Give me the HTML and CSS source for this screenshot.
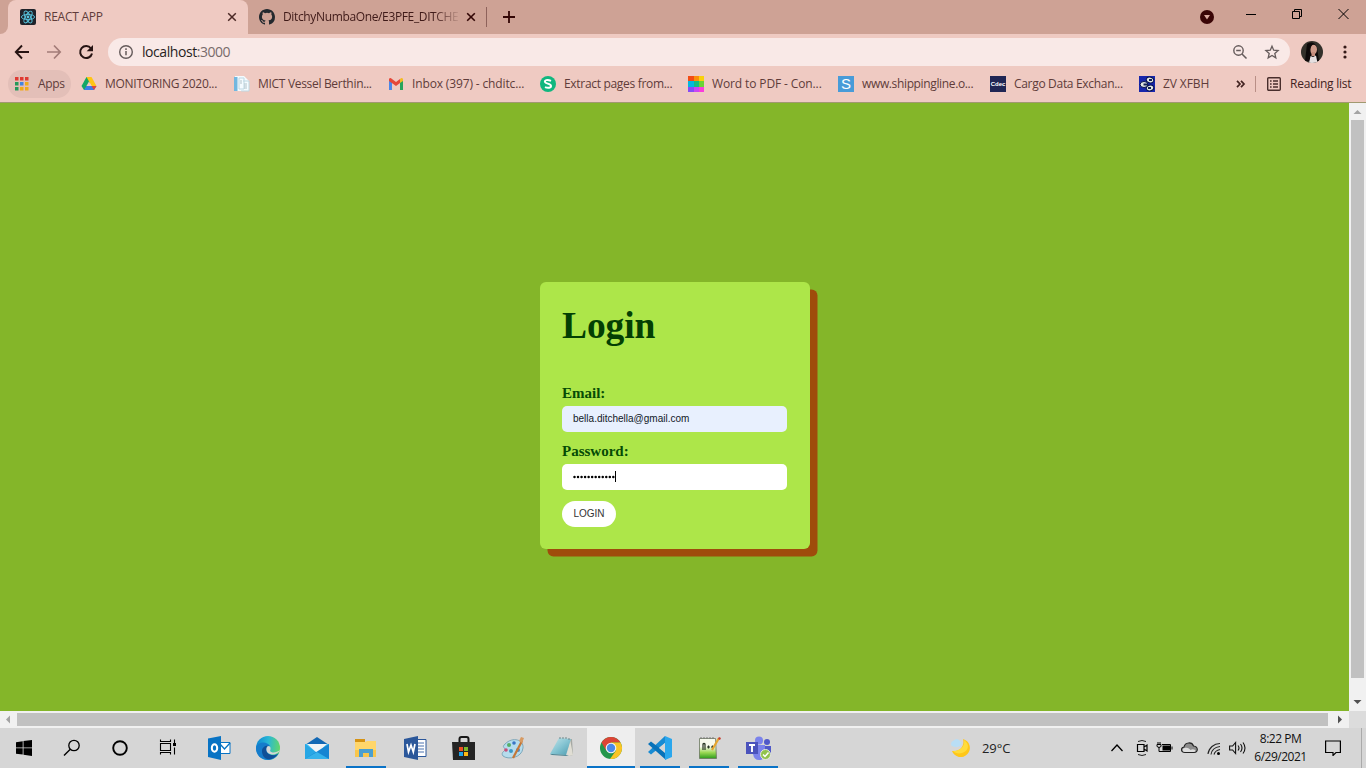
FILE: index.html
```html
<!DOCTYPE html>
<html lang="en">
<head>
<meta charset="utf-8">
<title>REACT APP</title>
<link rel="stylesheet" href="styles.css">
</head>
<body>
<header class="tabs">
  <span class="tab-edge"></span>
  <div class="tab active">
    <svg width="16" height="16" viewBox="0 0 16 16"><rect width="16" height="16" rx="2" fill="#20232a"/><g fill="none" stroke="#58c5df" stroke-width=".9"><ellipse cx="8" cy="8" rx="6.6" ry="2.6"/><ellipse cx="8" cy="8" rx="6.6" ry="2.6" transform="rotate(60 8 8)"/><ellipse cx="8" cy="8" rx="6.6" ry="2.6" transform="rotate(120 8 8)"/></g><circle cx="8" cy="8" r="1.4" fill="#58c5df"/></svg>
    <span class="tab-title">REACT APP</span>
    <svg class="x" width="10" height="10" viewBox="0 0 10 10"><path d="M1.2 1.2l7.6 7.6M8.8 1.2L1.2 8.8" stroke="#4b2926" stroke-width="1.5"/></svg>
  </div>
  <div class="tab second">
    <svg width="16" height="16" viewBox="0 0 16 16"><path fill="#24292e" d="M8 0C3.58 0 0 3.58 0 8c0 3.54 2.29 6.53 5.47 7.59.4.07.55-.17.55-.38 0-.19-.01-.82-.01-1.49-2.01.37-2.53-.49-2.69-.94-.09-.23-.48-.94-.82-1.13-.28-.15-.68-.52-.01-.53.63-.01 1.08.58 1.23.82.72 1.21 1.87.87 2.33.66.07-.52.28-.87.51-1.07-1.78-.2-3.64-.89-3.64-3.95 0-.87.31-1.59.82-2.15-.08-.2-.36-1.02.08-2.12 0 0 .67-.21 2.2.82a7.6 7.6 0 0 1 4 0c1.53-1.04 2.2-.82 2.2-.82.44 1.1.16 1.92.08 2.12.51.56.82 1.27.82 2.15 0 3.07-1.87 3.75-3.65 3.95.29.25.54.73.54 1.48 0 1.07-.01 1.93-.01 2.2 0 .21.15.46.55.38A8 8 0 0 0 16 8c0-4.42-3.58-8-8-8z"/></svg>
    <span class="tab-title fade">DitchyNumbaOne/E3PFE_DITCHE</span>
    <svg class="x" width="10" height="10" viewBox="0 0 10 10"><path d="M1.2 1.2l7.6 7.6M8.8 1.2L1.2 8.8" stroke="#320605" stroke-width="1.6"/></svg>
  </div>
  <span class="tab-rule"></span>
  <svg class="plus" width="12" height="12" viewBox="0 0 12 12"><path d="M6 0v12M0 6h12" stroke="#320605" stroke-width="1.8"/></svg>
  <div class="window-controls">
    <svg width="14" height="34" viewBox="0 0 14 34"><circle cx="7" cy="17" r="7" fill="#3a0506"/><path d="M4 15h6l-3 4.5z" fill="#dba99f"/></svg>
    <svg width="10" height="28" viewBox="0 0 10 28"><path d="M0 14.5h10" stroke="#000"/></svg>
    <svg width="10" height="28" viewBox="0 0 10 28"><path d="M.5 11.500h7v7h-7zM2.500 11.500v-2h7v7h-2" fill="none" stroke="#000"/></svg>
    <svg width="11" height="28" viewBox="0 0 11 28"><path d="M.5 9l10 10M10.500 9l-10 10" stroke="#000"/></svg>
  </div>
</header>
<nav class="toolbar">
  <svg width="16" height="16" viewBox="0 0 16 16"><path d="M15 8H2M8 1.500L1.800 8 8 14.500" fill="none" stroke="#261312" stroke-width="1.900"/></svg>
  <svg width="16" height="16" viewBox="0 0 16 16"><path d="M1 8h13M8 1.500L14.200 8 8 14.500" fill="none" stroke="#a37c78" stroke-width="1.700"/></svg>
  <svg width="16" height="16" viewBox="0 0 16 16"><path d="M13 4.500A6 6 0 1 0 14 9.500" fill="none" stroke="#261312" stroke-width="2"/><path d="M15 1v6.300H8.700z" fill="#261312"/></svg>
  <div class="address">
    <svg width="16" height="16" viewBox="0 0 16 16"><circle cx="8" cy="8" r="6.300" fill="none" stroke="#655b5b" stroke-width="1.400"/><path d="M8 7v4.300M8 4.300v1.600" stroke="#655b5b" stroke-width="1.500"/></svg>
    <span class="url">localhost<i>:3000</i></span>
    <svg class="magnifier" width="16" height="16" viewBox="0 0 16 16"><circle cx="6.500" cy="6.500" r="4.700" fill="none" stroke="#655b5b" stroke-width="1.400"/><path d="M4.200 6.500h4.600M10 10l4.500 4.500" stroke="#655b5b" stroke-width="1.500"/></svg>
    <svg width="16" height="16" viewBox="0 0 16 16"><path d="M8 2.200l1.700 4 4.400.4-3.300 2.900 1 4.300L8 11.500l-3.800 2.300 1-4.300L1.900 6.600l4.400-.4z" fill="none" stroke="#655b5b" stroke-width="1.300"/></svg>
  </div>
  <svg class="avatar" width="22" height="22" viewBox="0 0 22 22"><defs><clipPath id="face"><circle cx="11" cy="11" r="11"/></clipPath></defs><g clip-path="url(#face)"><path fill="#33302a" d="M0 0h22v22H0z"/><path fill="#0c0909" d="M6 3q6-4 10 3l2 14H4z"/><ellipse cx="12.500" cy="8.500" rx="3.500" ry="4.800" fill="#cf9b8a"/><path fill="#c68e7d" d="M10.500 11h3.500v4h-3.500z"/><path d="M8 22l1.500-7 2.500 1 3-1.500 1.500 7.500z" fill="#e5dfe0"/><path d="M8 8q1-5 5-5-3 1-3.500 5L9 18l-3 2z" fill="#100b0b"/></g></svg>
  <svg class="kebab" width="4" height="16" viewBox="0 0 4 16"><g fill="#351917"><circle cx="2" cy="3" r="1.600"/><circle cx="2" cy="8" r="1.600"/><circle cx="2" cy="13" r="1.600"/></g></svg>
</nav>
<nav class="bookmarks">
  <div class="apps"><svg width="14" height="14" viewBox="0 0 14 14"><path fill="#df3a32" d="M0 0h3.500v3.500H0zM5 0h3.500v3.500H5zM10 0h3.500v3.500H10z"/><path fill="#25995a" d="M0 5h3.500v3.500H0zM0 10h3.500v3.500H0z"/><path fill="#4285e0" d="M5 5h3.500v3.500H5z"/><path fill="#f1aa19" d="M10 5h3.500v3.500H10zM5 10h3.500v3.500H5zM10 10h3.500v3.500H10z"/></svg><span>Apps</span></div>
  <div class="mark m1"><svg width="16" height="16" viewBox="0 0 16 16"><path fill="#13a766" d="M5.500 1H8l2.500 4L5 14H3L.5 10z"/><path fill="#ffc515" d="M5.500 1h5l5 9h-5z"/><path fill="#3b7de8" d="M5.500 10h10L13 14H3z"/><path fill="#e44538" d="M10.500 10h5L13 14z"/><path fill="#efcac2" d="M8 5.500l2.700 4.500H5.400z"/></svg><span>MONITORING 2020...</span></div>
  <div class="mark m2"><svg width="16" height="16" viewBox="0 0 16 16"><path fill="#f4fbff" d="M1 0h9l5 5v10H1z"/><path fill="#72b7df" d="M0 1h3.500v14H0z"/><path d="M5 2h5v11H5zM9 5h6v10H7" fill="none" stroke="#bed7e2"/><path d="M6 5h2M6 7h2M10 8h3M10 10h3M10 12h3" stroke="#b3c3ca"/></svg><span>MICT Vessel Berthin...</span></div>
  <div class="mark m3"><svg width="16" height="16" viewBox="0 0 16 16"><path fill="#4c87e8" d="M1 4l3 2v8H1z"/><path fill="#29a45c" d="M12 6l3-2v10h-3z"/><path fill="#e64739" d="M1 3q1-2 3 0l4 3 4-3v4l-4 3-7-5z"/><path fill="#f3bb23" d="M12 3q2-2 3 0v2l-3 2z"/></svg><span>Inbox (397) - chditc...</span></div>
  <div class="mark m4"><svg width="16" height="16" viewBox="0 0 16 16"><circle cx="8" cy="8" r="8" fill="#10b77f"/><path d="M11 4.800C7 3 4.500 4.300 5 6c.5 1.800 5.700 1.500 6 3.800.2 2-3 2.600-6 1.300" fill="none" stroke="#fff" stroke-width="2"/></svg><span>Extract pages from...</span></div>
  <div class="mark m5"><svg width="16" height="16" viewBox="0 0 16 16"><path fill="#f24c15" d="M0 0h6v5H0z"/><path fill="#fa8e0b" d="M6 0h5v5H6z"/><path fill="#f8d10b" d="M11 0h5v5h-5z"/><path fill="#04b6df" d="M0 5h6v6H0z"/><path fill="#12be82" d="M6 5h5v6H6z"/><path fill="#69d435" d="M11 5h5v6h-5z"/><path fill="#874bf5" d="M0 11h6v5H0z"/><path fill="#ca44f6" d="M6 11h5v5H6z"/><path fill="#fa3bdc" d="M11 11h5v5h-5z"/></svg><span>Word to PDF - Con...</span></div>
  <div class="mark m6"><b class="ship">S</b><span>www.shippingline.o...</span></div>
  <div class="mark m7"><b class="cdec">Cdec</b><span>Cargo Data Exchan...</span></div>
  <div class="mark m8"><svg width="16" height="16" viewBox="0 0 16 16"><path fill="#1827ab" d="M0 0h16v16H0z"/><g fill="#e4eae4" stroke="#05104e"><ellipse cx="11" cy="4" rx="3.800" ry="2.900" transform="rotate(15 11 4)"/><ellipse cx="11" cy="12" rx="3.800" ry="2.900" transform="rotate(-15 11 12)"/><ellipse cx="5" cy="8.500" rx="3.900" ry="3"/></g><path d="M4.500 8.500H9M10 4h3M9 12h3" stroke="#122154" stroke-width="1.900"/></svg><span>ZV XFBH</span></div>
  <svg width="10" height="8" viewBox="0 0 10 8"><path d="M1 .8L4 4 1 7.200M5 .8L8 4 5 7.200" fill="none" stroke="#422321" stroke-width="1.700"/></svg>
  <span class="rule"></span>
  <svg width="14" height="14" viewBox="0 0 14 14"><rect x=".7" y=".7" width="12.600" height="12.600" rx="1" fill="none" stroke="#482e2c" stroke-width="1.400"/><path d="M3 4h1.600M6 4h5M3 7h1.600M6 7h5M3 10h1.600M6 10h5" stroke="#482e2c" stroke-width="1.500"/></svg>
  <span class="reading">Reading list</span>
</nav>
<main class="viewport">
  <section class="page">
    <form class="card">
      <h1>Login</h1>
      <label for="email">Email:</label>
      <input id="email" class="field filled" type="text" value="bella.ditchella@gmail.com">
      <label for="password">Password:</label>
      <div id="password" class="field password"><svg width="42" height="4" viewBox="0 0 42 4"><path d="M1.500 2h40" stroke="#000" stroke-width="2.500" stroke-linecap="round" stroke-dasharray="0 3.530"/></svg><span class="caret"></span></div>
      <button type="button">LOGIN</button>
    </form>
  </section>
  <div class="vbar"><svg width="17" height="17"><path d="M4.500 11l4-4 4 4z" fill="#a3a3a3"/></svg><span></span><svg width="17" height="17"><path d="M4.500 6l4 4 4-4z" fill="#505050"/></svg></div>
  <div class="hbar"><svg width="17" height="17"><path d="M10 4.500l-4 4 4 4z" fill="#a3a3a3"/></svg><span></span><svg width="17" height="17"><path d="M6 4.500l4 4-4 4z" fill="#505050"/></svg></div>
  <div class="corner"></div>
</main>
<footer class="taskbar">
  <div class="system">
    <svg width="16" height="16" viewBox="0 0 16 16"><path d="M0 2.300L6.700 1.200v6.300H0zM7.500 1L16 0v7.500H7.500zM0 8.300h6.700v6.300L0 13.700zM7.500 8.300H16V16l-8.500-1.200z"/></svg>
    <svg width="18" height="18" viewBox="0 0 18 18"><circle cx="11" cy="6.500" r="5.200" fill="none" stroke="#000" stroke-width="1.300"/><path d="M7.300 10.200L1 16.500" stroke="#000" stroke-width="1.400"/></svg>
    <svg width="18" height="18" viewBox="0 0 18 18"><circle cx="9" cy="9" r="6.800" fill="none" stroke="#000" stroke-width="1.900"/></svg>
    <svg width="18" height="16" viewBox="0 0 18 16"><path d="M1.500 .5v2h10v-2M1.500 15.500v-2h10v2M1.500 4.500h10v7h-10zM15.500 .5v4M15.500 8.500v7" fill="none" stroke="#000" stroke-width="1.100"/><path d="M14 4h3v3h-3z"/></svg>
  </div>
  <div class="programs">
    <div class="app"><svg viewBox="0 0 24 24"><path fill="#fff" stroke="#0873c4" d="M11 6.500h12v11H11z"/><path d="M13 8l4.500 5L23 7" fill="none" stroke="#0873c4" stroke-width="1.300"/><path fill="#0873c4" d="M1 2.500L14 0v24L1 21z"/><ellipse cx="7.500" cy="12" rx="2.700" ry="3.700" fill="none" stroke="#fff" stroke-width="2"/></svg></div>
    <div class="app"><svg viewBox="0 0 24 24"><defs><linearGradient id="edge" x1="0" y1=".3" x2="1" y2=".4"><stop stop-color="#0d87d3"/><stop offset=".5" stop-color="#2ab8d5"/><stop offset="1" stop-color="#62d66a"/></linearGradient></defs><circle cx="12" cy="12" r="12" fill="url(#edge)"/><path d="M0 12c2-7 11-7 14-2-3 0-4 3-3 6 2 4 8 4 12 1-3 5-7 7-11 7C5 24 0 19 0 12z" fill="#167ccb"/><path d="M6 15c0-4 4-6 7-5-3 1-3 4-2 6 2 4 8 4 11 2-3 4-7 6-11 5-3-1-5-4-5-8z" fill="#104f97"/><path d="M12 10c3 0 3 3 2 5 3 3 7 1 10-1-2 5-10 6-13 2-1-2-1-5 1-6z" fill="#d6d6d6"/></svg></div>
    <div class="app"><svg viewBox="0 0 24 24"><path d="M0 9l12-8 12 8v14H0z" fill="#1268b4"/><path d="M0 8h24v15H0z" fill="#40bcf0"/><path d="M2 8h20L12 17z" fill="#f1f3f5"/><path d="M0 8l12 9L0 23z" fill="#27a7e5"/><path d="M24 8L0 23h24z" fill="#1685d2"/><path d="M12 16l12 7H0z" fill="#35b2eb"/></svg></div>
    <div class="app running"><svg viewBox="0 0 24 24"><path fill="#d69313" d="M1 3h10v4H1z"/><path fill="#ffd66b" d="M1 6h10l2-1h9v16H1z"/><path fill="#f9c64c" d="M1 14h21v7H1z"/><path fill="#4a9fd0" d="M5 13h14v8h-4v-4H9v4H5z"/></svg></div>
    <div class="app"><svg viewBox="0 0 24 24"><path fill="#fff" stroke="#2b579a" d="M12 3.500h11v17H12z"/><path d="M15 7h6M15 10h6M15 13h6M15 16h6" stroke="#4a73af" stroke-width="1.200"/><path fill="#2b579a" d="M1 3L15 0v24L1 21z"/><path d="M4 8l1.500 8L8 9l2.300 7L12 8" fill="none" stroke="#fff" stroke-width="1.700"/></svg></div>
    <div class="app"><svg viewBox="0 0 24 24"><path d="M7.500 7V3q0-2 2-2h5q2 0 2 2v4" fill="none" stroke="#171717" stroke-width="2"/><path fill="#242424" d="M0 6h23v18H1z"/><path fill="#ee5023" d="M7 11h4v4H7z"/><path fill="#7cb829" d="M12 11h4v4h-4z"/><path fill="#20a3e8" d="M7 16h4v4H7z"/><path fill="#fbb813" d="M12 16h4v4h-4z"/></svg></div>
    <div class="app"><svg viewBox="0 0 24 24"><path d="M4 8C12 0 23 4 22 12c-1 10-15 12-20 8-3-4 3-5 2-7s-3-2 0-5z" fill="#b5dced" stroke="#6b9bb0" stroke-width=".8"/><g><circle cx="8" cy="9" r="2" fill="#57ae68"/><circle cx="13" cy="7" r="1.800" fill="#3a75c4"/><circle cx="5" cy="14" r="1.800" fill="#c94f7a"/><circle cx="10" cy="15" r="2" fill="#3b98c8"/><circle cx="17" cy="14" r="2" fill="#5485be"/></g><path d="M12 22L21 5" stroke="#c57737" stroke-width="2.200"/><path d="M18 5l2-4 3 1-2 5z" fill="#d79a62"/></svg></div>
    <div class="app"><svg viewBox="0 0 24 24"><defs><linearGradient id="note" x1="0" y1="0" x2="1" y2="1"><stop stop-color="#c6e6e9"/><stop offset=".5" stop-color="#86c5d3"/><stop offset="1" stop-color="#4c9cb0"/></linearGradient></defs><path d="M18 3h4l1 16-4 1z" fill="#a5a8a2"/><path d="M20 3l3 16-4 1-2-2z" fill="#e0ded4"/><path d="M9 2l12 1-5 16-16-1z" fill="url(#note)"/><path d="M0 18l16 1 3 1-17-1z" fill="#387888"/><path d="M10 1v2M13 1v2M16 1v2M19 2v2" stroke="#6f898d"/></svg></div>
    <div class="app running current"><svg viewBox="0 0 24 24"><circle cx="12" cy="12" r="11" fill="#24964b"/><path d="M2.500 6.500A11 11 0 0 1 21.500 6.500H12L7.500 15z" fill="#dc4436"/><path d="M12 6.500h9.500A11 11 0 0 1 11 23l6-8.500z" fill="#fac425"/><circle cx="12" cy="12" r="5.300" fill="#f4f4f4"/><circle cx="12" cy="12" r="4.200" fill="#4b89e8"/></svg></div>
    <div class="app running"><svg viewBox="0 0 24 24"><path d="M0 16L17 0v7L3 18.500z" fill="#188bd3"/><path d="M0 8l3-2.500L18 17v7z" fill="#0872b9"/><path d="M17 0l7 3v18l-7 3z" fill="#2ba7ed"/><path d="M11 12l6-5v10z" fill="#d6d6d6"/></svg></div>
    <div class="app running"><svg viewBox="0 0 24 24"><defs><linearGradient id="paper" x1="0" y1="0" x2="0" y2="1"><stop offset=".4" stop-color="#f7faed"/><stop offset=".7" stop-color="#9bd955"/><stop offset="1" stop-color="#2c9c1c"/></linearGradient></defs><path d="M2.500 2.500h16l1 20h-17z" fill="url(#paper)" stroke="#6b7660" stroke-width=".8"/><path d="M4 1v2M7 1v2M10 1v2M13 1v2M16 1v2" stroke="#777"/><path d="M6 14V8q1-1 2 0v6M10 11h3M11.500 9.500v3M14 11h3M15.500 9.500v3" stroke="#263320" fill="none" stroke-width="1.200"/><path d="M15 14L22 2" stroke="#e6a62f" stroke-width="2.200"/><path d="M21 3l1-2 2 1-1 2z" fill="#c43c32"/></svg></div>
    <div class="app running"><svg class="teams" viewBox="0 0 26 24"><circle cx="14" cy="4.500" r="4" fill="#7b83eb"/><circle cx="22" cy="6" r="3" fill="#5059c9"/><path d="M18 10h8v7q-1 5-8 4z" fill="#5059c9"/><path d="M8 9h12v9q-1 6-6 6t-6-6z" fill="#7b83eb"/><path d="M1 6h12v12H1z" fill="#4b53bc"/><path d="M4 9h6M7 9v7" stroke="#fff" stroke-width="1.900"/><circle cx="20.500" cy="18.500" r="5" fill="#91c34d" stroke="#e4e8dd"/><path d="M18 18.500l2 2 3.500-4" fill="none" stroke="#fff" stroke-width="1.500"/></svg></div>
  </div>
  <div class="weather"><svg width="20" height="20" viewBox="0 0 20 20"><path d="M12 1a9.200 9.200 0 1 1-11 12c8 1 13-5 11-12z" fill="#ffc719"/><path d="M13 2c6 4 5 11-2 13-4 1-7 0-9-2 8 0 12-5 11-11z" fill="#ffdc3c"/><path d="M1 8a3 3 0 0 1 1-5q4-4 7 0 3 2 0 5-4 2-8 0z" fill="#b9def5"/></svg><span>29°C</span></div>
  <div class="tray">
    <svg width="12" height="18" viewBox="0 0 12 18"><path d="M.5 12L6 6l5.500 6" fill="none" stroke="#000" stroke-width="1.300"/></svg>
    <svg width="12" height="18" viewBox="0 0 12 18"><path d="M2 2.500q4-2 8 0M2 15.500q4 2 8 0" fill="none" stroke="#222"/><path d="M1.500 5.500h6.500v7H1.500zM8 8l3-2v6L8 10" fill="none" stroke="#000" stroke-width="1.200"/></svg>
    <svg width="17" height="18" viewBox="0 0 17 18"><path d="M6 5.500h8.500v7h-9M16 7.500v3M1 5.500h4v2q-2 2-4 0zM2 3v2M4 3v2M3 8v4.500h3" fill="none" stroke="#000"/><path d="M6.500 6.500h7.500v5H6.500z"/></svg>
    <svg width="17" height="18" viewBox="0 0 17 18"><path d="M4 13.500c-4.500 0-4.500-5-1-5.500 1-5 8-5.500 9.500-1 5 .5 5 6.500.5 6.500z" fill="#8c8c8c" stroke="#222" stroke-width="1.100"/><path d="M4 13c-3 0-3-3.500-.5-4 3-1 5 .5 6 2 2-1.500 5-.5 5 1q-.5 1-2 1z" fill="#ddd"/></svg>
    <svg width="14" height="18" viewBox="0 0 14 18"><path d="M1 15A12 12 0 0 1 13 4.500M4 15.500q1-7 9-8M7 15.500q1-4 6-5" fill="none" stroke="#222" stroke-width="1.100"/><circle cx="11.500" cy="14.500" r="1.500"/></svg>
    <svg width="17" height="18" viewBox="0 0 17 18"><path d="M.6 7h3l3-3.500v11l-3-3.500h-3zM9 6.500q2 2.500 0 5M11.500 5q3 4 0 8M14 3.500q4 5.500 0 11" fill="none" stroke="#111" stroke-width="1.100"/></svg>
  </div>
  <div class="clock"><span>8:22 PM</span><span>6/29/2021</span></div>
  <svg class="notice" width="16" height="16" viewBox="0 0 16 16"><path d="M.6 1h14.800v11.500H11l-3 3v-3H.6z" fill="none" stroke="#000" stroke-width="1.200"/></svg>
  <span class="desktop-rule"></span>
</footer>
</body>
</html>
```
FILE: styles.css
```css
* { box-sizing: border-box; }
body { margin: 0; width: 1366px; height: 768px; overflow: hidden; display: flex; flex-direction: column; font: 12px/16px "Open Sans", sans-serif; color: #603c3a; }
svg { display: block; flex: none; }
span { white-space: nowrap; }

.tabs { height: 34px; flex: none; display: flex; align-items: center; background: #cea295; }
.tab-edge { width: 8px; height: 34px; background: #efcac2; }
.tab-edge::before { content: ""; display: block; height: 34px; background: #cea295; border-radius: 0 0 8px 0; }
.tab { height: 34px; display: flex; align-items: center; }
.active { width: 240px; padding: 0 11px 0 12px; background: #efcac2; border-radius: 8px 8px 0 0; }
.second { width: 238px; padding: 0 10px 0 11px; }
.tab-title { margin-left: 8px; letter-spacing: -.25px; }
.fade { width: 176px; overflow: hidden; color: #3f1a18; letter-spacing: -.36px; mask-image: linear-gradient(90deg, #000 150px, transparent 178px); }
.x { margin-left: auto; }
.tab-rule { width: 1px; height: 20px; background: #8e625b; }
.plus { margin-left: 16px; }
.window-controls { margin-left: auto; height: 34px; display: flex; align-items: flex-start; padding-right: 17px; }
.window-controls svg + svg { margin-left: 36px; }
.window-controls svg:nth-child(2) { margin-left: 32px; }

.toolbar { height: 34px; flex: none; display: flex; align-items: center; background: #efcac2; padding: 2px 19px 0 14px; gap: 16px; }
.address { height: 28px; width: 1182px; margin-left: -2px; border-radius: 14px; display: flex; align-items: center; background: #f9e9e7; padding: 0 10px; }
.url { margin-left: 8px; font-size: 14px; letter-spacing: -.44px; color: #281e1e; }
.url i { font-style: normal; color: #786b6b; }
.magnifier { margin: 0 16px 0 auto; }
.avatar { margin-left: -5px; }
.kebab { margin-left: 4px; }

.bookmarks { height: 35px; flex: none; display: flex; align-items: center; background: #efcac2; padding: 0 0 3px 8px; border-bottom: 1px solid #a19970; }
.apps { width: 63px; height: 28px; margin-right: 10px; border-radius: 14px; background: #e3bfb8; display: flex; align-items: center; gap: 9px; padding-left: 7px; }
.apps span { letter-spacing: -.3px; }
.mark { display: flex; align-items: center; gap: 8px; flex: none; letter-spacing: -.31px; }
.m1 { width: 153px; letter-spacing: -.27px; } .m2 { width: 154px; } .m3 { width: 152px; letter-spacing: -.14px; } .m4 { width: 148px; }
.m5 { width: 150px; letter-spacing: -.12px; } .m6 { width: 152px; letter-spacing: -.36px; } .m7 { width: 149px; } .m8 { width: 97px; letter-spacing: -.1px; }
.ship, .cdec { width: 16px; height: 16px; flex: none; color: #fff; text-align: center; letter-spacing: 0; }
.ship { background: #489bd8; font: 15px/16px "Liberation Sans", sans-serif; }
.cdec { background: #202654; font: bold 6px/16px "Liberation Sans", sans-serif; }
.rule { width: 1px; height: 16px; margin: 0 11px 0 9px; background: #b98f86; }
.reading { margin-left: 9px; letter-spacing: -.25px; color: #422322; }

.viewport { height: 625px; flex: none; display: grid; grid-template: 608px 17px / 1349px 17px; }
.page { background: #84b629; padding: 179px 0 0 540px; }
.card { width: 270px; height: 267px; margin: 0; padding: 22px; border-radius: 6px; background: #ade649; box-shadow: 7.500px 7.500px 0 #9f4c0b; color: #064b05; font: bold 15px/17px "Liberation Serif", serif; display: flex; flex-direction: column; align-items: flex-start; }
h1 { margin: 1px 0 38px; font-size: 37.500px; line-height: 42px; letter-spacing: -.1px; color: #033f03; }
.field { width: 225px; height: 26px; margin: 4px 0 11px; border: 0; border-radius: 5px; padding: 0 11px; font: 10px/14px "Liberation Sans", sans-serif; color: #111827; background: #fff; }
.filled { background: #e8f0fe; padding-bottom: 1px; }
.password { display: flex; align-items: center; padding-bottom: 1px; }
.caret { width: 1px; height: 11px; background: #000; }
button { width: 54px; height: 26px; padding: 0; border: 0; border-radius: 13px; background: #fff; color: #333; font: 10px/14px "Liberation Sans", sans-serif; }
.vbar, .hbar { display: flex; background: #f1f1f1; }
.vbar { flex-direction: column; }
.vbar span { width: 13px; height: 558px; margin: 0 2px auto; background: #c1c1c1; }
.hbar span { width: 1311px; height: 13px; margin: 2px auto 2px 0; background: #c1c1c1; }
.corner { background: #dcdcdc; }

.taskbar { height: 40px; flex: none; display: flex; align-items: center; background: #d6d6d6; color: #222; }
.system { width: 195px; display: flex; }
.system svg { margin-left: 15px; margin-right: 15px; }
.system svg:first-child { margin: 1px 16px; }
.programs { display: flex; gap: 1px; }
.app { width: 48px; height: 40px; padding-top: 8px; display: flex; flex-direction: column; align-items: center; justify-content: space-between; }
.app svg { width: 24px; height: 24px; }
.app .teams { width: 26px; }
.running::after { content: ""; width: 40px; height: 2px; background: #0a73c7; }
.current { background: #eee; }
.current::after { width: 48px; }
.weather { margin-left: 169px; display: flex; align-items: center; gap: 11px; font-size: 13px; letter-spacing: -.1px; }
.weather span { width: 29px; }
.tray { margin-left: auto; display: flex; align-items: center; gap: 8px; }
.tray svg:nth-child(2) { margin-left: 5px; }
.tray svg:nth-child(5) { margin-left: 1px; }
.clock { width: 55px; margin: 0 17px 0 7px; display: flex; flex-direction: column; align-items: center; line-height: 18px; letter-spacing: -.5px; color: #111; }
.notice { margin-right: 20px; }
.desktop-rule { width: 1px; height: 40px; margin-right: 4px; background: #aaa; }
```
